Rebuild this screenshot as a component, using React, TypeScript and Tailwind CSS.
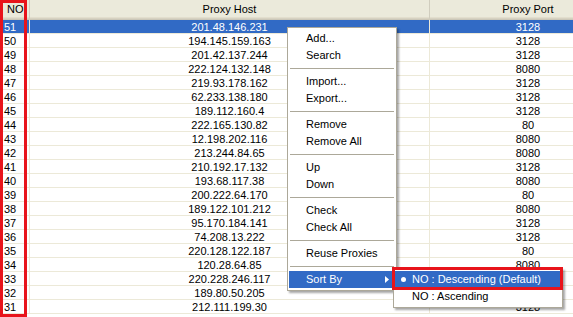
import React from "react";

const rows: [number, string, string][] = [
  [51, "201.48.146.231", "3128"],
  [50, "194.145.159.163", "3128"],
  [49, "201.42.137.244", "3128"],
  [48, "222.124.132.148", "8080"],
  [47, "219.93.178.162", "3128"],
  [46, "62.233.138.180", "3128"],
  [45, "189.112.160.4", "3128"],
  [44, "222.165.130.82", "80"],
  [43, "12.198.202.116", "8080"],
  [42, "213.244.84.65", "8080"],
  [41, "210.192.17.132", "3128"],
  [40, "193.68.117.38", "8080"],
  [39, "200.222.64.170", "80"],
  [38, "189.122.101.212", "8080"],
  [37, "95.170.184.141", "3128"],
  [36, "74.208.13.222", "3128"],
  [35, "220.128.122.187", "80"],
  [34, "120.28.64.85", "8080"],
  [33, "220.228.246.117", "8080"],
  [32, "189.80.50.205", "3128"],
  [31, "212.111.199.30", "3128"],
];

type MenuEntry = { label: string } | "sep";

const menu: MenuEntry[] = [
  { label: "Add..." },
  { label: "Search" },
  "sep",
  { label: "Import..." },
  { label: "Export..." },
  "sep",
  { label: "Remove" },
  { label: "Remove All" },
  "sep",
  { label: "Up" },
  { label: "Down" },
  "sep",
  { label: "Check" },
  { label: "Check All" },
  "sep",
  { label: "Reuse Proxies" },
  "sep",
];

export default function App() {
  return (
    <div className="relative w-[573px] h-[317px] overflow-hidden bg-white font-['Liberation_Sans',Arial,sans-serif] text-[11px] text-black">
      {/* header */}
      <div className="flex h-[20px] bg-[#EBEADB] shadow-[inset_0_-1px_0_#CBC7B8,inset_0_-2px_0_#D6D2C2,inset_0_-3px_0_#E2DECD]">
        <div className="w-[30px] shrink-0 pl-[7px] leading-[18px] border-r border-[#D0CDBE]">NO</div>
        <div className="w-[400px] shrink-0 text-center leading-[18px] border-r border-[#D0CDBE]">Proxy Host</div>
        <div className="w-[196px] shrink-0 text-center leading-[18px]">Proxy Port</div>
      </div>
      {/* rows */}
      <div className="flex flex-col">
        {rows.map(([no, host, port], i) => (
          <div
            key={no}
            className={
              "flex h-[14px] border-b border-[#ECE9D8] leading-[14px] " +
              (i === 0 ? "bg-[#316AC5] text-white" : "")
            }
          >
            <div className="w-[30px] shrink-0 pl-[4px] border-r border-[#ECE9D8]">{no}</div>
            <div className="w-[400px] shrink-0 text-center border-r border-[#ECE9D8]">{host}</div>
            <div className="w-[196px] shrink-0 text-center">{port}</div>
          </div>
        ))}
      </div>

      {/* red box around NO column */}
      <div className="absolute left-0 top-0 w-[27px] h-[317px] border-[3px] border-[#E8141B]" />

      {/* context menu */}
      <div className="absolute left-[287px] top-[27px] w-[110px] bg-white border border-[#ACA899] py-[2px] px-[1px] shadow-[2px_2px_2px_rgba(0,0,0,0.35)]">
        {menu.map((m, i) =>
          m === "sep" ? (
            <div key={i} className="h-[9px] flex items-center px-[1px]">
              <div className="h-px w-full bg-[#ACA899]" />
            </div>
          ) : (
            <div key={i} className="h-[17px] pl-[17px] leading-[17px]">
              {m.label}
            </div>
          )
        )}
        <div className="h-[17px] pl-[17px] leading-[17px] bg-[#316AC5] text-white flex items-center justify-between pr-[6px]">
          <span>Sort By</span>
          <svg width="4" height="7" viewBox="0 0 4 7">
            <polygon points="0,0 4,3.5 0,7" fill="#ffffff" />
          </svg>
        </div>
      </div>

      {/* submenu */}
      <div className="absolute left-[393px] top-[268px] w-[170px] bg-white border border-[#ACA899] py-[2px] px-[1px] shadow-[2px_2px_2px_rgba(0,0,0,0.35)]">
        <div className="relative h-[17px] pl-[17px] leading-[17px] bg-[#316AC5] text-white">
          <span className="absolute left-[6px] top-[6px] w-[5px] h-[5px] rounded-full bg-white" />
          NO : Descending (Default)
        </div>
        <div className="h-[17px] pl-[17px] leading-[17px]">NO : Ascending</div>
      </div>

      {/* red box around submenu item */}
      <div className="absolute left-[392px] top-[267px] w-[171px] h-[23px] border-[3px] border-[#E8141B]" />
    </div>
  );
}
